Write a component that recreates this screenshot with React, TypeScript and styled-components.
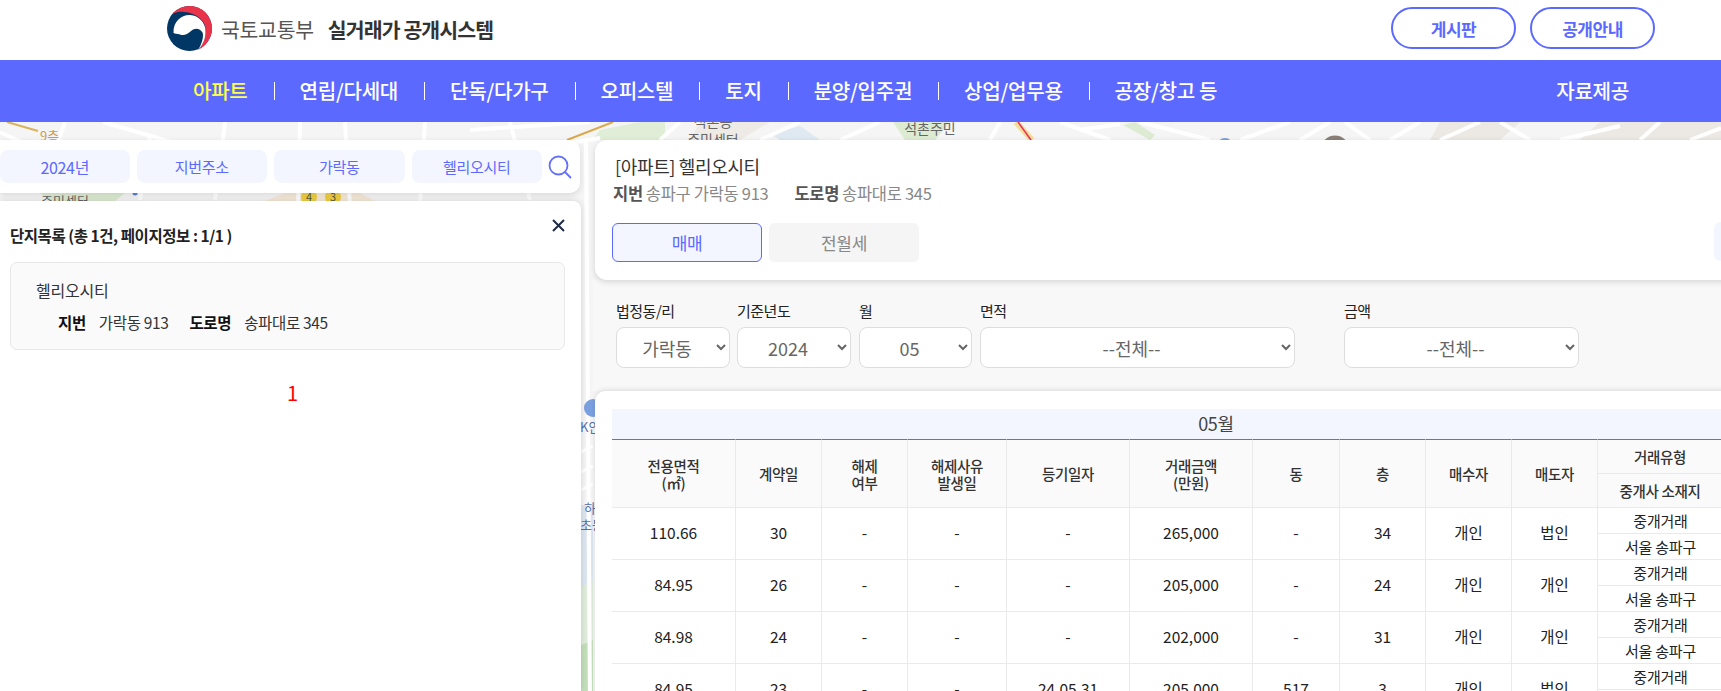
import React from "react";
import styled, { createGlobalStyle } from "styled-components";

const Global = createGlobalStyle`
  html, body { margin: 0; padding: 0; height: 100%; overflow: hidden; background: #fff; }
  body { font-family: "Noto Sans CJK KR", "Noto Sans", sans-serif; color: #333; }
  * { box-sizing: border-box; }
`;

const Page = styled.div`
  width: 1721px; height: 691px; display: flex; flex-direction: column; overflow: hidden;
`;
const Header = styled.header`
  height: 60px; flex: none; display: flex; align-items: center; padding: 0 66px 0 167px; background: #fff;
`;
const LogoMark = styled.svg`
  width: 45px; height: 45px; flex: none; margin-top: -3px;
`;
const Ministry = styled.span`
  margin-left: 9px; font-size: 20.5px; letter-spacing: -0.3px; color: #555; margin-top: -2px;
`;
const SystemName = styled.span`
  margin-left: 14px; font-size: 20.5px; font-weight: 700; letter-spacing: -0.9px; color: #333; margin-top: -2px;
`;
const HeaderButtons = styled.div`
  margin-left: auto; display: flex; gap: 14px; margin-top: -4px;
`;
const PillButton = styled.a`
  width: 125px; height: 42px; border: 2px solid #5c69ff; border-radius: 21px; display: flex;
  align-items: center; justify-content: center; font-size: 17px; font-weight: 700; color: #5c69ff; letter-spacing: -0.5px;
`;
const Nav = styled.nav`
  height: 62px; flex: none; background: #5c69ff; display: flex; align-items: center; padding: 0 92px 0 167px;
  position: relative; z-index: 2;
`;
const NavItem = styled.a<{ $active?: boolean; $first?: boolean }>`
  position: relative; padding: 0 26px; font-size: 20.1px; font-weight: 500; letter-spacing: -0.3px; line-height: 18px;
  color: ${(p) => (p.$active ? "#ffff4d" : "#fff")};
  ${(p) => !p.$first && `
    &::before { content: ""; position: absolute; left: 0; top: 0; width: 1px; height: 18px; background: #fff; }
  `}
`;
const NavEnd = styled.a`
  margin-left: auto; font-size: 20.1px; font-weight: 500; letter-spacing: -0.3px; color: #fff; line-height: 18px;
`;
const Stage = styled.main`
  position: relative; flex: 1; min-height: 0; display: flex; overflow: hidden; background: #f5f5f5;
`;
const MapCanvas = styled.svg`
  position: absolute; left: 0; top: 0; width: 1721px; height: 569px;
`;
const LeftColumn = styled.section`
  position: relative; width: 581px; flex: none; padding-top: 18px; display: flex; flex-direction: column; gap: 8px;
`;
const SearchBar = styled.div`
  width: 580px; height: 53px; flex: none; background: #fff; border-radius: 0 10px 10px 0; box-shadow: 0 2px 6px rgba(0,0,0,.12);
  display: flex; align-items: center; gap: 7px;
`;
const SearchChip = styled.div<{ $first?: boolean }>`
  width: ${(p) => (p.$first ? "129.5px" : "130.5px")}; height: 33px; border-radius: 8px; background: #f3f6ff; color: #5c69ff;
  display: flex; align-items: center; justify-content: center; font-size: ${(p) => (p.$first ? "16px" : "15px")}; letter-spacing: -0.3px; flex: none;
`;
const SearchIcon = styled.svg`
  width: 24px; height: 24px; flex: none; margin-left: -1.5px;
`;
const ListPanel = styled.div`
  flex: 1; background: #fff; border-radius: 0 8px 0 0; box-shadow: 0 0 6px rgba(0,0,0,.15);
  padding: 24px 16px 0 10px; position: relative;
`;
const ListTitle = styled.h3`
  margin: 0; font-size: 15.5px; font-weight: 700; color: #222; letter-spacing: -0.45px; line-height: 20px;
`;
const CloseIcon = styled.svg`
  position: absolute; right: 15px; top: 17px; width: 15px; height: 15px;
`;
const ComplexCard = styled.div`
  margin-top: 17px; height: 88px; background: #fafafa; border: 1px solid #e8e8e8; border-radius: 7px; padding: 15px 0 0 25px;
`;
const ComplexName = styled.div`
  font-size: 16px; line-height: 24px; color: #333; letter-spacing: -0.2px;
`;
const ComplexMeta = styled.div`
  margin: 9px 0 0 22px; display: flex; font-size: 15.5px; line-height: 22px; color: #333; letter-spacing: -0.35px;
`;
const MetaLabel = styled.b`
  font-weight: 700; color: #111; margin-right: 13px;
`;
const MetaValue = styled.span`
  margin-right: 21px;
`;
const Paging = styled.div`
  margin-top: 30px; text-align: center; color: #f00; font-size: 20px; line-height: 26px; padding-left: 10px;
`;
const RightColumn = styled.section`
  position: relative; width: 1300px; flex: none; margin-left: 12px; padding-top: 18px; display: flex; flex-direction: column;
`;
const InfoPanel = styled.div`
  height: 140px; flex: none; margin-left: 2px; background: #fff; border-radius: 12px 0 0 12px; box-shadow: 0 2px 6px rgba(0,0,0,.14);
  padding: 13px 0 0 18px; position: relative; z-index: 1;
`;
const InfoTitle = styled.div`
  padding-left: 2px; font-size: 18px; line-height: 26px; color: #333; letter-spacing: -0.35px;
`;
const InfoAddress = styled.div`
  margin-top: 2px; display: flex; font-size: 16.5px; line-height: 24px; letter-spacing: -0.3px; color: #888;
`;
const AddressLabel = styled.b`
  font-weight: 700; color: #555; margin-right: 3px;
`;
const AddressValue = styled.span`
  margin-right: 26px;
`;
const TabRow = styled.div`
  margin: 18px 0 0 -1px; display: flex; gap: 7px;
`;
const Tab = styled.div<{ $active?: boolean }>`
  width: 150px; height: 39px; border-radius: 6px; display: flex; align-items: center; justify-content: center;
  font-size: 17px; letter-spacing: -0.3px;
  background: ${(p) => (p.$active ? "#f3f6ff" : "#f5f5f5")};
  border: 1px solid ${(p) => (p.$active ? "#5c69ff" : "#f5f5f5")};
  color: ${(p) => (p.$active ? "#5c69ff" : "#888")};
`;
const SideTab = styled.div`
  position: absolute; left: 1119px; top: 82px; width: 60px; height: 39px; border-radius: 6px; background: #f3f6ff;
`;
const FilterPanel = styled.form`
  height: 111px; flex: none; background: #f8f8f8; display: flex; padding: 19px 0 0 23px;
`;
const Field = styled.label<{ $w: number; $gap?: number }>`
  width: ${(p) => p.$w}px; margin-right: ${(p) => p.$gap ?? 7}px; flex: none; display: flex; flex-direction: column;
`;
const FieldLabel = styled.span`
  font-size: 15px; line-height: 24px; height: 28px; color: #222; letter-spacing: -0.5px;
`;
const Select = styled.select`
  width: 100%; height: 41px; border: 1px solid #ddd; border-radius: 8px; background-color: #fff; color: #666;
  font-family: inherit; font-size: 18px; text-align: center; text-align-last: center; padding: 0 4px;
`;
const TablePanel = styled.div`
  flex: 1; margin-left: 1.5px; background: #fff; border-radius: 10px 0 0 0; box-shadow: 0 -1px 5px rgba(0,0,0,.12);
  padding: 18px 0 0 17.5px; position: relative; z-index: 1;
`;
const MonthBand = styled.div`
  width: 1208px; height: 30px; background: #f3f6ff; text-align: center; font-size: 18px; line-height: 28px; color: #444; letter-spacing: -0.3px;
`;
const TradeTable = styled.table`
  width: 1111px; table-layout: fixed; border-collapse: separate; border-spacing: 0;
`;
const Th = styled.th<{ $sub?: boolean }>`
  height: ${(p) => (p.$sub ? "34px" : "35px")}; padding: 0; background: #fafafa; font-size: 14.5px; font-weight: 500; line-height: 17px; color: #333;
  letter-spacing: -0.3px; border-right: 1px solid #eaeaea; border-bottom: 1px solid #eaeaea; text-align: center;
  ${(p) => !p.$sub && "border-top: 1px solid #5c69ff;"}
`;
const Td = styled.td`
  height: 26px; padding: 0 0 3px; font-size: 15.5px; line-height: 20px; text-align: center; color: #222;
  border-right: 1px solid #eaeaea; border-bottom: 1px solid #eaeaea;
`;
const SubTd = styled(Td)`
  padding: 0; font-size: 15px; letter-spacing: -0.2px; border-right: 0;
`;

const widths = [124, 86, 86, 99, 123, 123, 87, 86, 86, 86, 125];
const rows = [
  ["110.66", "30", "-", "-", "-", "265,000", "-", "34", "개인", "법인"],
  ["84.95", "26", "-", "-", "-", "205,000", "-", "24", "개인", "개인"],
  ["84.98", "24", "-", "-", "-", "202,000", "-", "31", "개인", "개인"],
  ["84.95", "23", "-", "-", "24.05.31", "205,000", "517", "3", "개인", "법인"],
];
const navItems = ["연립/다세대", "단독/다가구", "오피스텔", "토지", "분양/입주권", "상업/업무용", "공장/창고 등"];
const labelStyle = { fontFamily: '"Noto Sans CJK KR", sans-serif' };

function MapDrawing() {
  const roads = [
    "M-10 128 L130 190", "M65 122 L55 150", "M103 122 L250 165", "M150 136 L140 200", "M225 122 L215 200",
    "M300 122 L298 205", "M345 122 L350 205", "M425 122 L420 205", "M470 130 L590 122", "M510 122 L530 200",
    "M586 140 L590 700", "M560 145 L600 138", "M680 122 L660 140", "M800 122 L760 140", "M880 122 L840 140",
    "M1000 122 L990 140", "M1060 122 L1110 140", "M1080 130 L1120 124", "M1140 122 L1210 140", "M1240 140 L1290 122",
    "M1300 140 L1330 122", "M1345 122 L1370 140", "M1420 122 L1390 140", "M1440 140 L1480 122", "M1500 122 L1530 140",
    "M1560 140 L1620 126", "M1660 122 L1640 140", "M1690 140 L1721 128",
  ];
  const stripRoads = ["M581 430 L593 424", "M581 452 L593 446", "M581 472 L593 466", "M581 490 L593 484"];
  return (
    <MapCanvas viewBox="0 122 1721 569" aria-hidden="true" style={labelStyle}>
      <rect x="0" y="122" width="1721" height="569" fill="#f5f5f5" />
      <rect x="581" y="505" width="12" height="82" fill="#dde6f0" />
      <polygon points="581,587 593,580 593,640 581,645" fill="#dfecdc" />
      <polygon points="581,645 593,640 593,691 581,691" fill="#c2dfba" />
      <polygon points="592,140 600,130 640,122 665,122 665,140" fill="#e0eed8" />
      <polygon points="893,122 950,122 935,140 905,140" fill="#dcebd2" />
      <polygon points="1123,125 1135,122 1155,135 1150,140" fill="#dcebd2" />
      <polygon points="40,193 125,193 115,201 50,201" fill="#dcebd2" />
      <polygon points="265,201 285,193 360,193 375,201" fill="#f6ead9" />
      <polygon points="700,122 770,122 740,140 690,140" fill="#eeebe6" />
      <polygon points="1440,122 1520,122 1500,140 1430,140" fill="#ece9e4" />
      <polygon points="1600,122 1721,122 1721,140 1580,140" fill="#ece9e4" />
      <polygon points="770,134 800,126 820,140 780,140" fill="#dfe9f2" />
      {roads.map((d) => <path key={d} d={d} stroke="#fff" strokeWidth="4" fill="none" />)}
      {stripRoads.map((d) => <path key={d} d={d} stroke="#fff" strokeWidth="3" fill="none" />)}
      <path d="M7 122 L38 131" stroke="#d9b35c" strokeWidth="2" fill="none" />
      <path d="M567 140 L613 122" stroke="#d9a94c" strokeWidth="2" fill="none" />
      <path d="M1016 122 L1032 140" stroke="#f5dd9a" strokeWidth="6" fill="none" />
      <path d="M1018 122 L1031 140" stroke="#e8305a" strokeWidth="1.5" fill="none" />
      <text x="40" y="141" fontSize="13" fill="#c8a050">9층</text>
      <text x="713" y="127" fontSize="14" fill="#666" textAnchor="middle">석촌동</text>
      <text x="713" y="145" fontSize="14" fill="#666" textAnchor="middle">주민센터</text>
      <text x="930" y="134" fontSize="14" fill="#666" textAnchor="middle">석촌주민</text>
      <text x="65" y="206" fontSize="13" fill="#666" textAnchor="middle">주민센터</text>
      <circle cx="135" cy="193" r="2.5" fill="#5a7fd8" />
      <circle cx="1225" cy="146" r="8" fill="#7ba0e0" />
      <circle cx="1335" cy="150" r="12" fill="none" stroke="#8a8078" strokeWidth="5" />
      <circle cx="593" cy="408" r="9" fill="#7ba0e0" />
      <text x="580" y="432" fontSize="13" fill="#5570b0">K안</text>
      <text x="584" y="513" fontSize="13" fill="#5570b0">하</text>
      <text x="580" y="530" fontSize="13" fill="#5570b0">초등</text>
      <circle cx="309" cy="197" r="8" fill="#f0cf40" />
      <circle cx="333" cy="197" r="8" fill="#f0cf40" />
      <text x="309" y="201" fontSize="11" fill="#554" textAnchor="middle">4</text>
      <text x="333" y="201" fontSize="11" fill="#554" textAnchor="middle">3</text>
    </MapCanvas>
  );
}

export default function App() {
  return (
    <Page>
      <Global />
      <Header>
        <LogoMark viewBox="0 0 45 45" aria-label="국토교통부">
          <circle cx="22.5" cy="22.5" r="22.5" fill="#003764" />
          <path d="M5.5 7.8 C10 2.8 16 0 22.5 0 C35 0 45 10 45 22.5 C45 32 39 40 31 44 C38 36 41 26 37 17 C31 7 15 3 5.5 7.8Z" fill="#e8334a" />
          <path d="M6.5 27 C6 15 15 8.5 23 9 C32 9.5 38.5 17 38.5 25 C39 33 35 40 31 44 C35 38 37 30 35.5 26.5 C33 22 28 21.5 24 25 C20 28.5 17 30 13 28.5 C10 27.5 8 28 6.5 27Z" fill="#fff" />
        </LogoMark>
        <Ministry>국토교통부</Ministry>
        <SystemName>실거래가 공개시스템</SystemName>
        <HeaderButtons>
          <PillButton>게시판</PillButton>
          <PillButton>공개안내</PillButton>
        </HeaderButtons>
      </Header>
      <Nav>
        <NavItem $active $first>아파트</NavItem>
        {navItems.map((n) => <NavItem key={n}>{n}</NavItem>)}
        <NavEnd>자료제공</NavEnd>
      </Nav>
      <Stage>
        <MapDrawing />
        <LeftColumn>
          <SearchBar>
            <SearchChip $first>2024년</SearchChip>
            <SearchChip>지번주소</SearchChip>
            <SearchChip>가락동</SearchChip>
            <SearchChip>헬리오시티</SearchChip>
            <SearchIcon viewBox="0 0 24 24" fill="none" stroke="#6470f5" strokeWidth="1.8">
              <circle cx="10.5" cy="10.5" r="9" />
              <path d="M17 17 L23 23" />
            </SearchIcon>
          </SearchBar>
          <ListPanel>
            <ListTitle>단지목록 (총 1건, 페이지정보 : 1/1 )</ListTitle>
            <CloseIcon viewBox="0 0 15 15" fill="none" stroke="#1f2a44" strokeWidth="2">
              <path d="M2 2 L13 13 M13 2 L2 13" />
            </CloseIcon>
            <ComplexCard>
              <ComplexName>헬리오시티</ComplexName>
              <ComplexMeta>
                <MetaLabel>지번</MetaLabel>
                <MetaValue>가락동 913</MetaValue>
                <MetaLabel>도로명</MetaLabel>
                <span>송파대로 345</span>
              </ComplexMeta>
            </ComplexCard>
            <Paging>1</Paging>
          </ListPanel>
        </LeftColumn>
        <RightColumn>
          <InfoPanel>
            <InfoTitle>[아파트] 헬리오시티</InfoTitle>
            <InfoAddress>
              <AddressLabel>지번</AddressLabel>
              <AddressValue>송파구 가락동 913</AddressValue>
              <AddressLabel>도로명</AddressLabel>
              <span>송파대로 345</span>
            </InfoAddress>
            <TabRow>
              <Tab $active>매매</Tab>
              <Tab>전월세</Tab>
            </TabRow>
            <SideTab />
          </InfoPanel>
          <FilterPanel>
            <Field $w={114}>
              <FieldLabel>법정동/리</FieldLabel>
              <Select defaultValue="가락동"><option>가락동</option></Select>
            </Field>
            <Field $w={114} $gap={8}>
              <FieldLabel>기준년도</FieldLabel>
              <Select defaultValue="2024"><option>2024</option></Select>
            </Field>
            <Field $w={113} $gap={8}>
              <FieldLabel>월</FieldLabel>
              <Select defaultValue="05"><option>05</option></Select>
            </Field>
            <Field $w={315} $gap={49}>
              <FieldLabel>면적</FieldLabel>
              <Select><option>--전체--</option></Select>
            </Field>
            <Field $w={235}>
              <FieldLabel>금액</FieldLabel>
              <Select><option>--전체--</option></Select>
            </Field>
          </FilterPanel>
          <TablePanel>
            <MonthBand>05월</MonthBand>
            <TradeTable>
              <colgroup>
                {widths.map((w, i) => <col key={i} style={{ width: w }} />)}
              </colgroup>
              <thead>
                <tr>
                  <Th rowSpan={2}>전용면적<br />(㎡)</Th>
                  <Th rowSpan={2}>계약일</Th>
                  <Th rowSpan={2}>해제<br />여부</Th>
                  <Th rowSpan={2}>해제사유<br />발생일</Th>
                  <Th rowSpan={2}>등기일자</Th>
                  <Th rowSpan={2}>거래금액<br />(만원)</Th>
                  <Th rowSpan={2}>동</Th>
                  <Th rowSpan={2}>층</Th>
                  <Th rowSpan={2}>매수자</Th>
                  <Th rowSpan={2}>매도자</Th>
                  <Th>거래유형</Th>
                </tr>
                <tr>
                  <Th $sub>중개사 소재지</Th>
                </tr>
              </thead>
              <tbody>
                {rows.map((r, i) => (
                  <React.Fragment key={i}>
                    <tr>
                      {r.map((c, j) => <Td key={j} rowSpan={2}>{c}</Td>)}
                      <SubTd>중개거래</SubTd>
                    </tr>
                    <tr>
                      <SubTd>서울 송파구</SubTd>
                    </tr>
                  </React.Fragment>
                ))}
              </tbody>
            </TradeTable>
          </TablePanel>
        </RightColumn>
      </Stage>
    </Page>
  );
}
